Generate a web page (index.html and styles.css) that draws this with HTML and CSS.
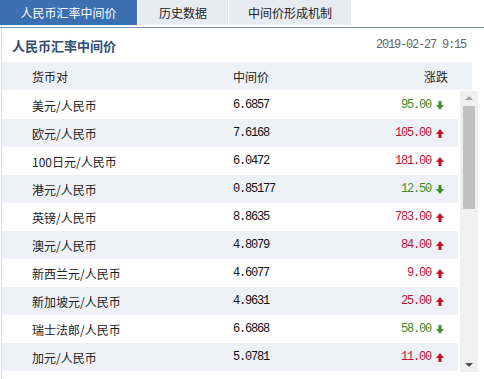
FILE: index.html
```html
<!DOCTYPE html>
<html>
<head>
<meta charset="utf-8">
<link rel="stylesheet" href="styles.css">
</head>
<body>
<div class="tabs">
  <div class="tab active">人民币汇率中间价</div>
  <div class="tab t2">历史数据</div>
  <div class="tab t3">中间价形成机制</div>
</div>
<div class="panel">
  <div class="titlebar">
    <div class="title">人民币汇率中间价</div>
    <div class="date">2019-02-27 9:15</div>
  </div>
  <div class="head">
    <div class="c1">货币对</div>
    <div class="c2">中间价</div>
    <div class="c3">涨跌</div>
  </div>
  <div class="body">
    <div class="rows">
      <div class="row"><div class="c1">美元/人民币</div><div class="c2 num">6.6857</div><div class="c3 num down">95.00<svg class="ar" viewBox="0 0 8 9"><path d="M2.5 0h3v4H8L4 9 0 4h2.5z"/></svg></div></div>
      <div class="row alt"><div class="c1">欧元/人民币</div><div class="c2 num">7.6168</div><div class="c3 num up">105.00<svg class="ar" viewBox="0 0 8 9"><path d="M2.5 9h3V5H8L4 0 0 5h2.5z"/></svg></div></div>
      <div class="row"><div class="c1">100日元/人民币</div><div class="c2 num">6.0472</div><div class="c3 num up">181.00<svg class="ar" viewBox="0 0 8 9"><path d="M2.5 9h3V5H8L4 0 0 5h2.5z"/></svg></div></div>
      <div class="row alt"><div class="c1">港元/人民币</div><div class="c2 num">0.85177</div><div class="c3 num down">12.50<svg class="ar" viewBox="0 0 8 9"><path d="M2.5 0h3v4H8L4 9 0 4h2.5z"/></svg></div></div>
      <div class="row"><div class="c1">英镑/人民币</div><div class="c2 num">8.8635</div><div class="c3 num up">783.00<svg class="ar" viewBox="0 0 8 9"><path d="M2.5 9h3V5H8L4 0 0 5h2.5z"/></svg></div></div>
      <div class="row alt"><div class="c1">澳元/人民币</div><div class="c2 num">4.8079</div><div class="c3 num up">84.00<svg class="ar" viewBox="0 0 8 9"><path d="M2.5 9h3V5H8L4 0 0 5h2.5z"/></svg></div></div>
      <div class="row"><div class="c1">新西兰元/人民币</div><div class="c2 num">4.6077</div><div class="c3 num up">9.00<svg class="ar" viewBox="0 0 8 9"><path d="M2.5 9h3V5H8L4 0 0 5h2.5z"/></svg></div></div>
      <div class="row alt"><div class="c1">新加坡元/人民币</div><div class="c2 num">4.9631</div><div class="c3 num up">25.00<svg class="ar" viewBox="0 0 8 9"><path d="M2.5 9h3V5H8L4 0 0 5h2.5z"/></svg></div></div>
      <div class="row"><div class="c1">瑞士法郎/人民币</div><div class="c2 num">6.6868</div><div class="c3 num down">58.00<svg class="ar" viewBox="0 0 8 9"><path d="M2.5 0h3v4H8L4 9 0 4h2.5z"/></svg></div></div>
      <div class="row alt"><div class="c1">加元/人民币</div><div class="c2 num">5.0781</div><div class="c3 num up">11.00<svg class="ar" viewBox="0 0 8 9"><path d="M2.5 9h3V5H8L4 0 0 5h2.5z"/></svg></div></div>
    </div>
    <div class="scrollbar">
      <div class="sb-up"></div>
      <div class="thumb"></div>
      <div class="sb-fill"></div>
      <div class="sb-down"></div>
    </div>
  </div>
</div>
</body>
</html>
```
FILE: styles.css
```css
* { box-sizing: border-box; }
html, body { margin: 0; padding: 0; background: #fff; }
body {
  width: 484px;
  height: 379px;
  overflow: hidden;
  font-family: "Noto Sans CJK SC", "Noto Sans", sans-serif;
  font-size: 12px;
  color: #222;
}
.tabs {
  display: flex;
  height: 28px;
  padding-bottom: 2px;
  border-bottom: 1px solid #7d94ad;
}
.tab {
  height: 25px;
  line-height: 25px;
  text-align: center;
  background: #e7ecf2;
  color: #222;
  font-size: 12px;
}
.tab.active { width: 137px; background: #3a6fb2; color: #fff; }
.tab.t2 { width: 90px; margin-left: 1px; }
.tab.t3 { width: 122px; margin-left: 1px; }
.panel {
  margin-left: 1px;
  border-left: 1px solid #dde1e6;
  height: 352px;
}
.titlebar {
  display: flex;
  justify-content: space-between;
  align-items: center;
  height: 34px;
  padding: 0 18px 0 10px;
}
.title { font-weight: bold; font-size: 13px; color: #2f4d74; }
.date {
  font-family: "Liberation Mono", monospace;
  font-size: 12px;
  letter-spacing: -1.2px;
  color: #666;
}
.head, .row {
  display: grid;
  grid-template-columns: 201px 1fr auto;
  align-items: center;
  padding-left: 30px;
}
.head {
  height: 28px;
  width: 470px;
  padding-right: 24px;
  background: #eef2f7;
}
.body { display: flex; }
.rows { width: 456px; padding-top: 1px; }
.row { height: 28px; background: #fff; padding-right: 14px; }
.row.alt { background: #eef2f7; }
.num {
  font-family: "Liberation Mono", monospace;
  letter-spacing: -1.2px;
  font-size: 12px;
  color: #111;
}
.c3.num {
  display: flex;
  justify-content: flex-end;
  align-items: center;
}
.up { color: #b8143a !important; }
.down { color: #3d8a25 !important; }
.ar { width: 8px; height: 9px; margin-left: 5px; }
.up .ar { fill: #c8102e; }
.down .ar { fill: #3f8f2b; }
.scrollbar {
  width: 18px;
  margin-left: 2px;
  margin-top: 1px;
  height: 281px;
  background: #f0f0f0;
  display: flex;
  flex-direction: column;
  align-items: center;
}
.sb-up, .sb-down {
  height: 15px;
  width: 100%;
  position: relative;
}
.sb-up::after, .sb-down::after {
  content: "";
  position: absolute;
  left: 5px;
  top: 5px;
  border-left: 4px solid transparent;
  border-right: 4px solid transparent;
}
.sb-up::after { border-bottom: 4px solid #a3a3a3; }
.sb-down::after { border-top: 4px solid #505050; top: 6px; }
.thumb { width: 12px; height: 103px; background: #c1c1c1; }
.sb-fill { flex: 1; }
```
